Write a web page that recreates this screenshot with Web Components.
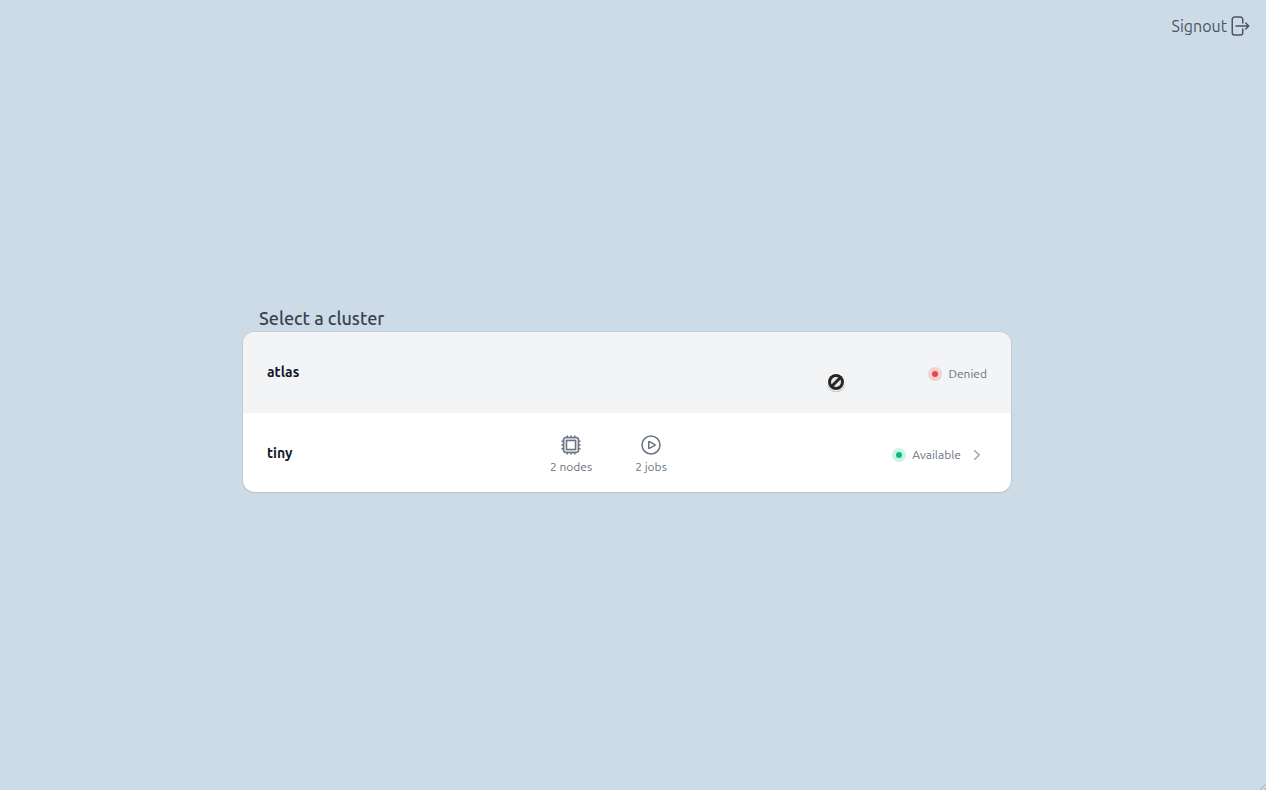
<!DOCTYPE html>
<html lang="en">
<head>
<meta charset="utf-8">
<meta name="viewport" content="width=device-width, initial-scale=1">
<title>Clusters</title>
<style>
  body { margin: 0; background: #cddbe6; font-family: Ubuntu, "Noto Sans", sans-serif; }
</style>
</head>
<body>
<cluster-page>
  <signout-link slot="header">Signout</signout-link>
  <cluster-list heading="Select a cluster">
    <cluster-row name="atlas" denied>
      <status-badge slot="status" kind="denied">Denied</status-badge>
    </cluster-row>
    <cluster-row name="tiny">
      <cluster-stat slot="stats" icon="chip">2 nodes</cluster-stat>
      <cluster-stat slot="stats" icon="play">2 jobs</cluster-stat>
      <status-badge slot="status" kind="available">Available</status-badge>
    </cluster-row>
  </cluster-list>
</cluster-page>
<script>
  const define = (name, render) => customElements.define(name, class extends HTMLElement {
    constructor() {
      super();
      this.attachShadow({ mode: "open" });
    }
    connectedCallback() {
      this.shadowRoot.innerHTML = render(this);
    }
  });

  define("cluster-page", () => `
    <style>
      :host { display: flex; flex-direction: column; min-height: 100vh; position: relative; }
      header { display: flex; justify-content: flex-end; padding: 14px 15px; }
      main { flex: 1; display: flex; align-items: center; justify-content: center; padding: 0 12px 46px 0; }
      .grip { position: absolute; right: 0; bottom: 0; display: block; }
    </style>
    <header><slot name="header"></slot></header>
    <main><slot></slot></main>
    <svg class="grip" width="6" height="6" viewBox="0 0 6 6" fill="none" stroke="#a9adb1" aria-hidden="true">
      <path d="M0 6L6 0M4 6l2-2"/>
    </svg>`);

  define("signout-link", () => `
    <style>
      :host { display: block; }
      a { display: flex; align-items: center; color: #4b5563; font-size: 16px; line-height: 24px; text-decoration: none; }
      svg { display: block; }
    </style>
    <a href="#signout"><slot></slot>
      <svg width="24" height="24" viewBox="0 0 24 24" fill="none" stroke="currentColor" stroke-width="1.5" stroke-linecap="round" stroke-linejoin="round" aria-hidden="true">
        <path d="M15.75 9V5.25A2.25 2.25 0 0013.5 3h-6a2.25 2.25 0 00-2.25 2.25v13.5A2.25 2.25 0 007.5 21h6a2.25 2.25 0 002.25-2.25V15m3 0l3-3m0 0l-3-3m3 3H9"/>
      </svg>
    </a>`);

  define("cluster-list", el => `
    <style>
      :host { display: block; flex: 0 1 768px; min-width: 0; }
      h1 { margin: 0; padding: 0 16px; font-size: 18px; line-height: 28px; font-weight: 500; color: #374151; }
      .card { border-radius: 12px; overflow: hidden; background: #fff; box-shadow: 0 0 0 1px rgba(17,24,39,.05), 0 1px 2px rgba(0,0,0,.07); }
    </style>
    <h1>${el.getAttribute("heading")}</h1>
    <div class="card" role="list"><slot></slot></div>`);

  define("cluster-row", el => {
    const denied = el.hasAttribute("denied");
    const open = denied ? "div" : `a href="#${el.getAttribute("name")}"`;
    return `
    <style>
      :host { display: block; position: relative; }
      :host([denied]) { background: #f3f4f6; cursor: not-allowed; }
      :host(:not([denied])) .row { border-top: 1px solid #f3f4f6; }
      .row { display: grid; grid-template-columns: 264px 160px 1fr; align-items: center; min-height: 80px; padding: 0 24px; box-sizing: border-box; text-decoration: none; color: #6b7280; }
      .name { font-size: 14px; line-height: 20px; font-weight: 700; color: #111827; }
      .stats { display: grid; grid-template-columns: 80px 80px; padding-top: 5px; }
      .status { display: flex; align-items: center; justify-content: flex-end; gap: 6px; padding-top: 4px; }
      svg { display: block; }
      .pointer { position: absolute; right: 165px; top: 40px; }
    </style>
    <${open} class="row">
      <span class="name">${el.getAttribute("name")}</span>
      <span class="stats"><slot name="stats"></slot></span>
      <span class="status"><slot name="status"></slot>
        ${denied ? "" : `<svg width="20" height="20" viewBox="0 0 20 20" fill="#9ca3af" aria-hidden="true">
          <path fill-rule="evenodd" clip-rule="evenodd" d="M7.21 14.77a.75.75 0 01.02-1.06L11.168 10 7.23 6.29a.75.75 0 111.04-1.08l4.5 4.25a.75.75 0 010 1.08l-4.5 4.25a.75.75 0 01-1.06-.02z"/>
        </svg>`}
      </span>
    </${denied ? "div" : "a"}>
    ${denied ? `<svg class="pointer" width="20" height="21" viewBox="0 0 20 21" fill="none" aria-hidden="true">
      <circle cx="10" cy="11" r="9.3" fill="#000" fill-opacity=".18"/>
      <circle cx="10" cy="10" r="9" fill="#fff"/>
      <circle cx="10" cy="10" r="8" fill="#262626"/>
      <circle cx="10" cy="10" r="5" fill="#e8e8e8"/>
      <path d="M6 14L14 6" stroke="#262626" stroke-width="3"/>
    </svg>` : ""}`;
  });

  const icons = {
    chip: `<path fill="#e5e7eb" fill-rule="evenodd" d="M6.75 19.5h10.5a2.25 2.25 0 002.25-2.25V6.75a2.25 2.25 0 00-2.25-2.25H6.75A2.25 2.25 0 004.5 6.75v10.5a2.25 2.25 0 002.25 2.25zm.75-12h9v9h-9v-9z"/>
      <path d="M8.25 3v1.5M4.5 8.25H3m18 0h-1.5M4.5 12H3m18 0h-1.5m-15 3.75H3m18 0h-1.5M8.25 19.5V21M12 3v1.5m0 15V21m3.75-18v1.5m0 15V21"/>`,
    play: `<path d="M21 12a9 9 0 11-18 0 9 9 0 0118 0z"/>
      <path d="M15.91 11.672a.375.375 0 010 .656l-5.603 3.113a.375.375 0 01-.557-.328V8.887c0-.286.307-.466.557-.327l5.603 3.112z"/>`
  };

  define("cluster-stat", el => `
    <style>
      :host { display: flex; flex-direction: column; align-items: center; font-size: 12px; line-height: 20px; color: #6b7280; white-space: nowrap; }
      svg { display: block; }
    </style>
    <svg width="24" height="24" viewBox="0 0 24 24" fill="none" stroke="currentColor" stroke-width="1.5" stroke-linecap="round" stroke-linejoin="round" aria-hidden="true">${icons[el.getAttribute("icon")]}</svg>
    <span><slot></slot></span>`);

  define("status-badge", () => `
    <style>
      :host { display: flex; align-items: center; gap: 6px; font-size: 12px; line-height: 16px; color: #6b7280; }
      .halo { display: grid; place-items: center; width: 14px; height: 14px; border-radius: 50%; background: #cff2e6; }
      .dot { width: 6px; height: 6px; border-radius: 50%; background: #10b981; }
      :host([kind="denied"]) .halo { background: #f2d1d4; }
      :host([kind="denied"]) .dot { background: #ef4444; }
    </style>
    <span class="halo"><span class="dot"></span></span>
    <span><slot></slot></span>`);
</script>
</body>
</html>
